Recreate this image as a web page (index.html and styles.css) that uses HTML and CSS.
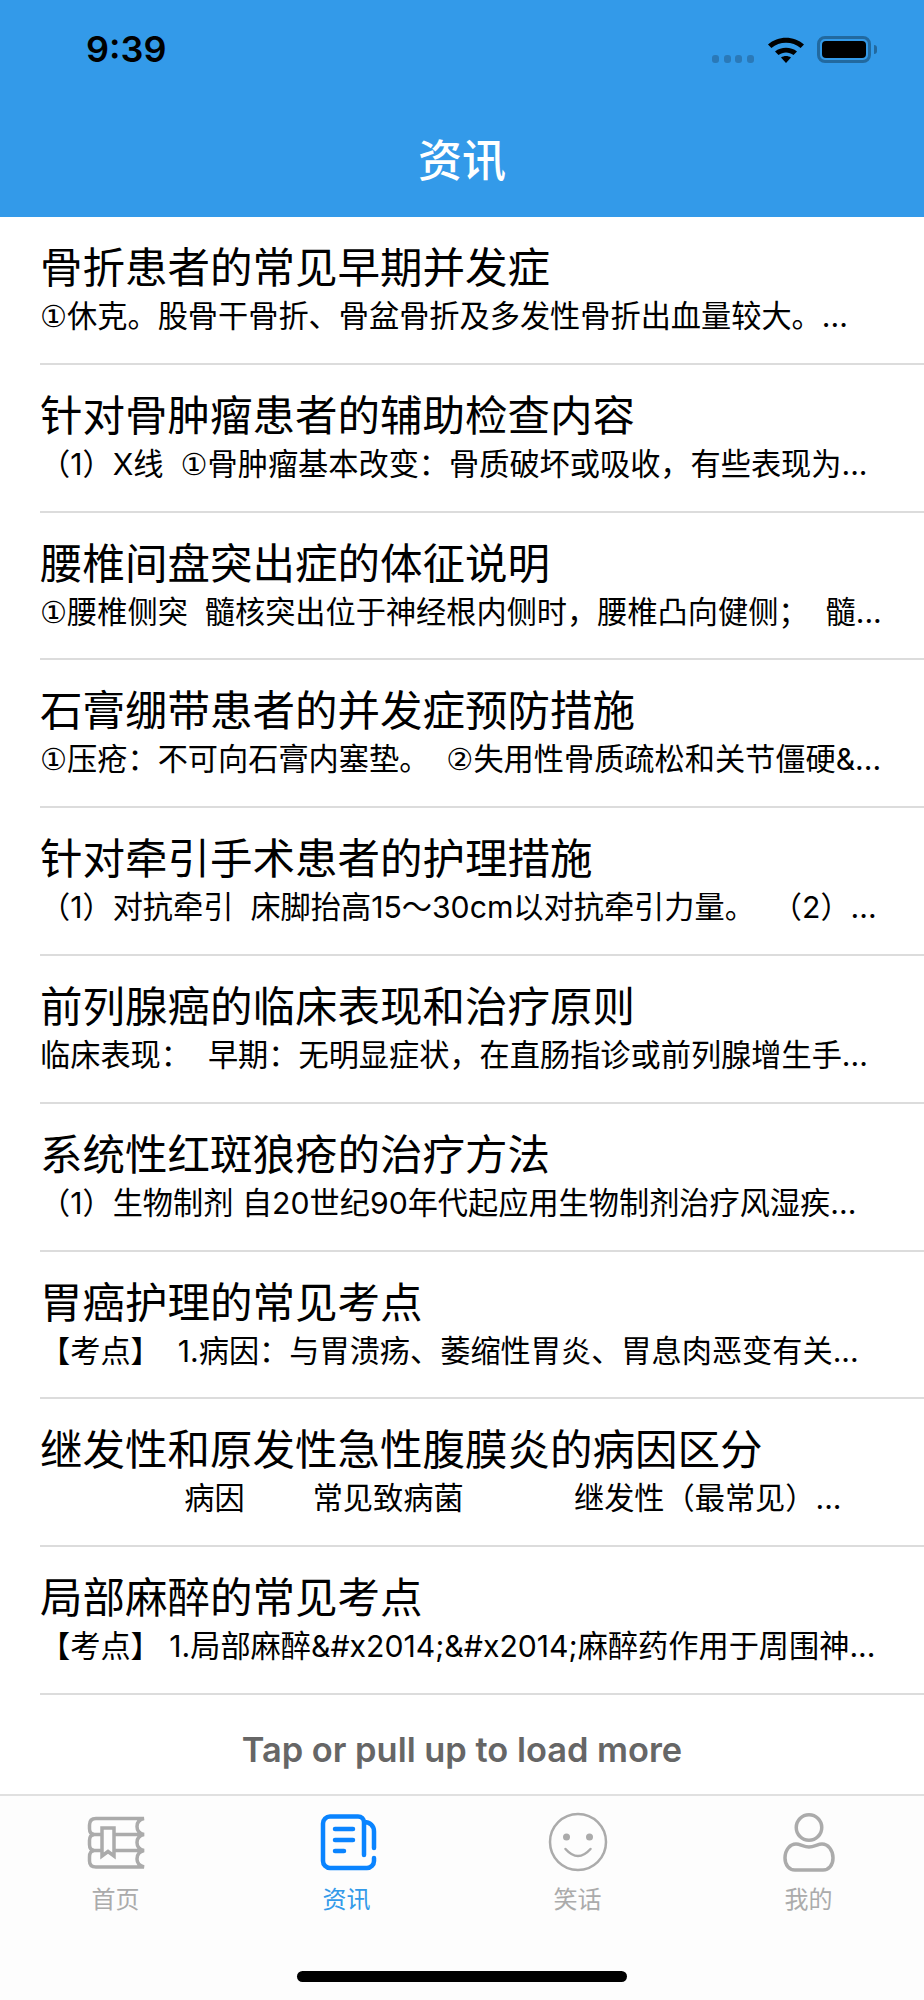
FILE: index.html
```html
<!DOCTYPE html>
<html lang="zh-CN">
<head>
    <meta charset="UTF-8">
    <meta name="viewport" content="width=device-width, initial-scale=1.0">
    <title>资讯</title>
    <link rel="stylesheet" href="styles.css">
</head>
<body>

    <div class="screen">
        <!-- Blue header with status bar -->
        <header class="header">
            <div class="status-bar">
                <span class="time">9:39</span>
                <div class="status-icons">
                    <div class="signal"><i></i><i></i><i></i><i></i></div>
                    <svg class="wifi" width="38" height="28" viewBox="0 0 38 28">
                        <path d="M1 9.500C11 .5 27 .5 37 9.500L33.600 13C25.500 6 12.500 6 4.400 13Z"/>
                        <path d="M8 16.500C14 11.500 24 11.500 30 16.500L26.500 20C22 16.500 16 16.500 11.500 20Z"/>
                        <path d="M14 22.500C17 20.500 21 20.500 24 22.500L19 28Z"/>
                    </svg>
                    <div class="battery"><div class="battery-fill"></div></div>
                    <div class="battery-cap"></div>
                </div>
            </div>
            <h1 class="page-title">资讯</h1>
        </header>

        <!-- News list -->
        <ul class="news-list">
            <li class="news-item">
                <h2>骨折患者的常见早期并发症</h2>
                <p><span class="num">①</span>休克。股骨干骨折、骨盆骨折及多发性骨折出血量较大。...</p>
            </li>
            <li class="news-item">
                <h2>针对骨肿瘤患者的辅助检查内容</h2>
                <p>（1）X线  <span class="num">①</span>骨肿瘤基本改变：骨质破坏或吸收，有些表现为...</p>
            </li>
            <li class="news-item">
                <h2>腰椎间盘突出症的体征说明</h2>
                <p><span class="num">①</span>腰椎侧突  髓核突出位于神经根内侧时，腰椎凸向健侧；  髓...</p>
            </li>
            <li class="news-item">
                <h2>石膏绷带患者的并发症预防措施</h2>
                <p><span class="num">①</span>压疮：不可向石膏内塞垫。  <span class="num">②</span>失用性骨质疏松和关节僵硬&amp;...</p>
            </li>
            <li class="news-item">
                <h2>针对牵引手术患者的护理措施</h2>
                <p>（1）对抗牵引  床脚抬高15～30cm以对抗牵引力量。  （2）...</p>
            </li>
            <li class="news-item">
                <h2>前列腺癌的临床表现和治疗原则</h2>
                <p>临床表现：  早期：无明显症状，在直肠指诊或前列腺增生手...</p>
            </li>
            <li class="news-item">
                <h2>系统性红斑狼疮的治疗方法</h2>
                <p>（1）生物制剂 自20世纪90年代起应用生物制剂治疗风湿疾...</p>
            </li>
            <li class="news-item">
                <h2>胃癌护理的常见考点</h2>
                <p>【考点】  1.病因：与胃溃疡、萎缩性胃炎、胃息肉恶变有关...</p>
            </li>
            <li class="news-item">
                <h2>继发性和原发性急性腹膜炎的病因区分</h2>
                <p>                 病因        常见致病菌             继发性（最常见）...</p>
            </li>
            <li class="news-item">
                <h2>局部麻醉的常见考点</h2>
                <p>【考点】 1.局部麻醉&amp;#x2014;&amp;#x2014;麻醉药作用于周围神...</p>
            </li>
        </ul>

        <div class="load-more">Tap or pull up to load more</div>

        <!-- Bottom tabs -->
        <nav class="tab-bar">
            <div class="tab">
                <svg class="tab-icon" width="60" height="60" viewBox="0 0 60 60">
                    <path d="M58 6.500Q51 8 51 14.500Q51 21 58 22.500Q51 24 51 30.500Q51 37 58 38.500Q51 40 51 47Q51 53 58 55H10Q3.500 55 3.500 49V45Q3.500 39 8 38.500Q3.500 38 3.500 32.500V28.500Q3.500 23 8 22.500Q3.500 22 3.500 16.500V13Q3.500 6.500 10 6.500Z" fill="none" stroke="#ababab" stroke-width="3.500"/>
                    <path d="M16 16H28V44L22 39.500L16 44ZM28 22.500H56M28 38.500H56M5 22.500H16M5 38.500H16" fill="none" stroke="#ababab" stroke-width="3.500"/>
                </svg>
                <span>首页</span>
            </div>
            <div class="tab tab-active">
                <svg class="tab-icon" width="60" height="60" viewBox="0 0 60 60">
                    <path d="M57 46v3a7 7 0 0 1-7 7H13a7 7 0 0 1-7-7V11.500a7 7 0 0 1 7-7h28c3.500 0 6 2.500 6 6V43M47 10c6 0 10 4 10 9.500V36" fill="none" stroke="#0a84ff" stroke-width="4.500" stroke-linecap="round" stroke-linejoin="round"/>
                    <path d="M18 17h18M18 28h18M18 39h9" fill="none" stroke="#0a84ff" stroke-width="4.500" stroke-linecap="round"/>
                </svg>
                <span>资讯</span>
            </div>
            <div class="tab">
                <svg class="tab-icon" width="60" height="60" viewBox="0 0 60 60">
                    <circle cx="30" cy="30" r="28" fill="none" stroke="#ababab" stroke-width="2.500"/>
                    <circle cx="18.500" cy="25" r="3.500" fill="#ababab"/>
                    <circle cx="41.500" cy="25" r="3.500" fill="#ababab"/>
                    <path d="M17.500 37Q30 51 42.500 37" fill="none" stroke="#ababab" stroke-width="2.500" stroke-linecap="round"/>
                </svg>
                <span>笑话</span>
            </div>
            <div class="tab">
                <svg class="tab-icon" width="60" height="60" viewBox="0 0 60 60">
                    <circle cx="30" cy="15.500" r="12.750" fill="none" stroke="#ababab" stroke-width="3.500"/>
                    <path d="M17 32c-6 0-11 6-11 14 0 7 4 12 10 12h28c6 0 10-5 10-12 0-8-5-14-11-14-4 0-8 3-13 3s-9-3-13-3Z" fill="none" stroke="#ababab" stroke-width="3.500"/>
                </svg>
                <span>我的</span>
            </div>
        </nav>

        <div class="home-bar"><div class="home-indicator"></div></div>
    </div>

</body>
</html>
```
FILE: styles.css
```css
* {
    box-sizing: border-box;
}
body {
    margin: 0;
    background-color: #ffffff;
    font-family: "Inter", "Noto Sans CJK SC", sans-serif;
    color: #000000;
}
.screen {
    width: 924px;
    height: 2000px;
    display: flex;
    flex-direction: column;
    overflow: hidden;
}
.header {
    height: 217px;
    background-color: #339ae9;
    flex-shrink: 0;
}
.status-bar {
    height: 99px;
    padding: 27px 47px 0 86px;
    display: flex;
    justify-content: space-between;
    align-items: flex-start;
}
.time {
    font-size: 36px;
    font-weight: 600;
    line-height: 44px;
}
.status-icons {
    display: flex;
    align-items: center;
    height: 44px;
}
.signal {
    display: flex;
    gap: 4.600px;
    margin: 20px 13px 0 0;
}
.signal i {
    width: 7px;
    height: 8px;
    border-radius: 3px;
    background-color: #2a79b8;
}
.wifi {
    margin-right: 12px;
}
.battery {
    width: 54px;
    height: 27px;
    border: 3px solid #22699f;
    border-radius: 8px;
    padding: 2px;
}
.battery-fill {
    height: 100%;
    background-color: #000000;
    border-radius: 4px;
}
.battery-cap {
    width: 3px;
    height: 9px;
    margin-left: 3px;
    background-color: #22699f;
    border-radius: 0 3px 3px 0;
}
.page-title {
    margin: 0;
    height: 118px;
    padding-top: 34px;
    text-align: center;
    font-size: 44px;
    line-height: 56px;
    font-weight: 500;
    color: #ffffff;
}
.news-list {
    list-style: none;
    margin: 0;
    padding: 0;
}
.news-item {
    height: 147.800px;
    margin-left: 40px;
    padding-top: 23px;
    border-bottom: 2px solid #dcdcdc;
}
.news-item h2 {
    margin: 0;
    font-size: 42.500px;
    line-height: 56px;
    font-weight: normal;
}
.news-item p {
    margin: 0;
    font-size: 30.200px;
    line-height: 40px;
    white-space: pre;
    overflow: hidden;
}
.num {
    font-family: "DejaVu Sans", sans-serif;
}
.load-more {
    height: 99px;
    padding-top: 10px;
    display: flex;
    align-items: center;
    justify-content: center;
    font-size: 34.400px;
    font-weight: 600;
    color: #666666;
}
.tab-bar {
    height: 120px;
    border-top: 2px solid #e0e0e0;
    padding-top: 16px;
    background-color: #fdfdfd;
    display: grid;
    grid-template-columns: repeat(4, 231px);
    flex-shrink: 0;
}
.tab {
    display: flex;
    flex-direction: column;
    align-items: center;
    gap: 12px;
    font-size: 24px;
    line-height: 32px;
    color: #ababab;
}
.tab-active {
    color: #339ae9;
}
.home-bar {
    flex: 1;
    display: flex;
    justify-content: center;
    align-items: flex-end;
    padding-bottom: 18px;
    background-color: #fdfdfd;
}
.home-indicator {
    width: 330px;
    height: 11px;
    background-color: #000000;
    border-radius: 6px;
}
```
